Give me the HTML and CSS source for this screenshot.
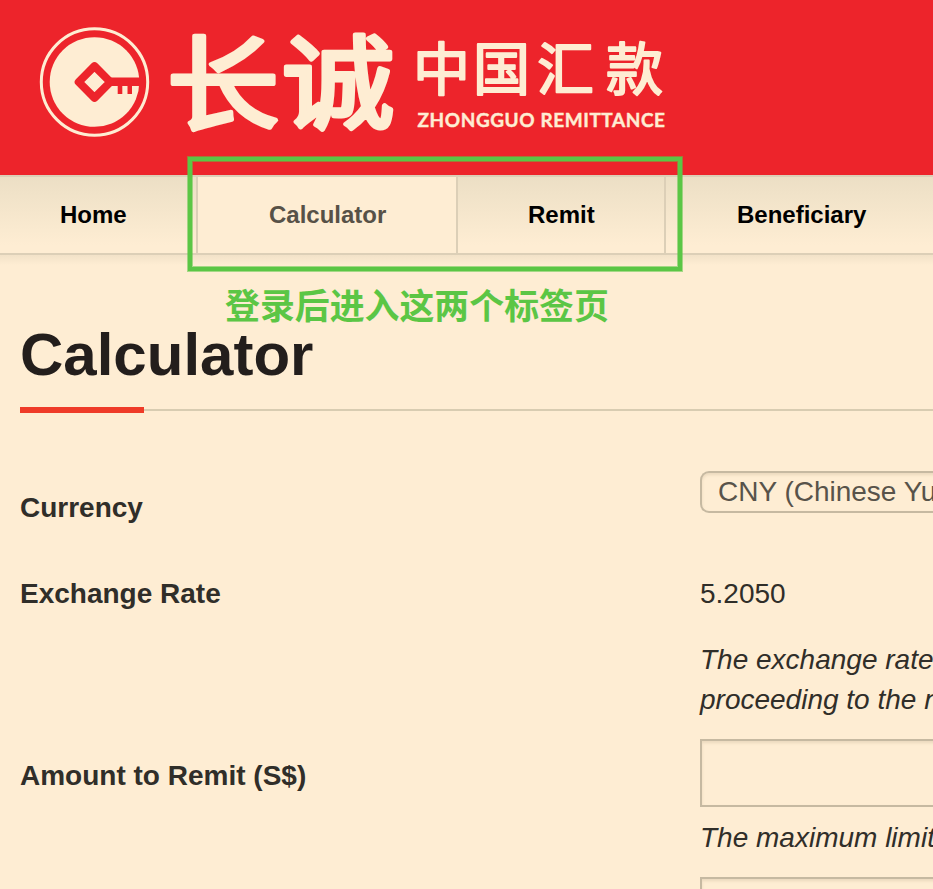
FILE: index.html
```html
<!DOCTYPE html>
<html lang="en">
<head>
<meta charset="utf-8">
<title>Calculator</title>
<link rel="stylesheet" href="styles.css">
</head>
<body>
<header class="header">
  <svg class="logo" width="640" height="120" viewBox="35 20 640 120">
    <circle cx="94.500" cy="82" r="53.200" class="ring"/>
    <circle cx="94.500" cy="82" r="44.800" class="coin"/>
    <path class="key" d="M94.500 66.200 L110.300 82 L94.500 97.800 L78.700 82 Z"/>
    <path class="cut" d="M108 77.500H143V86H132V94H127.500V86H122.300V94H117.700V86H108Z"/>
    <g class="brand">
      <text transform="translate(167 122) scale(1.040 .95)">长</text>
      <text transform="translate(282 121) scale(1.040 .95)">诚</text>
    </g>
    <text class="brand-sub" x="413 473 537 606" y="90">中国汇款</text>
    <text class="brand-en" x="417.500" y="127" textLength="247.500">ZHONGGUO REMITTANCE</text>
  </svg>
</header>
<nav class="nav">
  <a class="tab tab-first">Home</a>
  <a class="tab tab-active">Calculator</a>
  <a class="tab">Remit</a>
  <a class="tab tab-last">Beneficiary</a>
</nav>
<div class="highlight"></div>
<div class="note" lang="zh">登录后进入这两个标签页</div>
<main class="content">
  <h1 class="title">Calculator</h1>
  <div class="rule"></div>
  <div class="row row-currency">
    <div class="label">Currency</div>
    <div class="select">CNY (Chinese Yu</div>
  </div>
  <div class="row row-rate">
    <div class="label">Exchange Rate</div>
    <div class="field">
      <div class="value">5.2050</div>
      <p class="hint">The exchange rate<br>proceeding to the n</p>
    </div>
  </div>
  <div class="row row-amount">
    <div class="label">Amount to Remit (S$)</div>
    <div class="field">
      <div class="input"></div>
      <p class="hint">The maximum limit</p>
      <div class="input input-cut"></div>
    </div>
  </div>
</main>
</body>
</html>
```
FILE: styles.css
```css
* { box-sizing: border-box; }
body {
  margin: 0;
  position: relative;
  height: 889px;
  overflow: hidden;
  background: #feedd3;
  color: #302e29;
  font: 28px/40px "Liberation Sans", Arial, sans-serif;
}
.header {
  height: 175px;
  padding: 20px 0 0 35px;
  background: #ed242b;
}
.logo { display: block; overflow: visible; }
.ring { fill: none; stroke: #feedd3; stroke-width: 3; }
.coin { fill: #feedd3; }
.key { fill: #feedd3; stroke: #ed242b; stroke-width: 8; stroke-linejoin: round; }
.cut { fill: #ed242b; }
.brand, .brand-sub {
  fill: #feedd3;
  stroke: #feedd3;
  stroke-linejoin: round;
  font-family: "Noto Sans CJK SC", sans-serif;
  font-weight: 400;
}
.brand { font-size: 108px; stroke-width: 5; }
.brand-sub { font-size: 57px; stroke-width: 2; }
.brand-en {
  fill: #feedd3;
  stroke: #feedd3;
  stroke-width: .4;
  font: 700 19px Lato, sans-serif;
}
.nav {
  display: flex;
  height: 80px;
  border-top: 2px solid #dccfb7;
  border-bottom: 2px solid #dccfb7;
  background: linear-gradient(#ecdfc5, #feedd3 90%);
}
.tab {
  flex: none;
  padding: 0 70px;
  border-right: 2px solid #dccfb7;
  color: #000;
  font-size: 24px;
  font-weight: 700;
  line-height: 76px;
}
.tab-first { width: 198px; padding: 0 0 0 60px; }
.tab-active { width: 260px; padding-left: 71px; background: #feedd3; color: #575147; }
.tab:nth-child(3) { width: 208px; }
.tab-last { flex: 1; border: 0; padding: 0 0 0 71px; }
.highlight {
  position: absolute;
  left: 187px;
  top: 156px;
  width: 496px;
  height: 116px;
  border: 1px solid rgba(91, 198, 69, .55);
  box-shadow: inset 0 0 0 4px #5bc645, inset 0 0 0 5px rgba(91, 198, 69, .55);
}
.note {
  position: absolute;
  left: 225px;
  top: 284px;
  color: #5bc645;
  font: 700 34.900px/40px "Noto Sans CJK SC", sans-serif;
  white-space: nowrap;
}
.content {
  height: 634px;
  padding: 65px 0 0 20px;
  overflow: hidden;
  background: linear-gradient(#f2e2c8, #feedd3) 0 0 / 100% 10px no-repeat;
}
.title {
  margin: 0;
  color: #231e1c;
  font-size: 60px;
  line-height: 70px;
}
.rule {
  height: 6px;
  margin-top: 17px;
  background:
    linear-gradient(#ef3b28, #ef3b28) 0 0 / 124px 6px no-repeat,
    linear-gradient(#d8ccb1, #d8ccb1) 0 2px / 100% 2px no-repeat;
}
.row { display: flex; white-space: nowrap; }
.label { flex: 0 0 680px; font-weight: 700; }
.field { flex: 1; min-width: 0; }
.row-currency { margin-top: 58px; height: 103px; }
.row-currency .label { padding-top: 17px; }
.select {
  flex: 1;
  min-width: 0;
  height: 42px;
  margin-right: -8px;
  padding-left: 16px;
  border: 2px solid #c6b9a1;
  border-right: 0;
  border-radius: 9px 0 0 9px;
  box-shadow: inset 0 2px 3px rgba(100, 80, 40, .12);
  color: #58534a;
  line-height: 38px;
}
.hint { margin: 0; font-style: italic; }
.row-rate .hint { margin-top: 26px; }
.row-amount { margin-top: 19px; }
.row-amount .label { padding-top: 17px; }
.input {
  height: 68px;
  margin-right: -8px;
  border: 2px solid #c6b9a1;
  border-right: 0;
  box-shadow: inset 0 2px 3px rgba(100, 80, 40, .12);
}
.input-cut { height: 16px; border-bottom: 0; }
.row-amount .hint { margin: 11px 0 19px; }
```
